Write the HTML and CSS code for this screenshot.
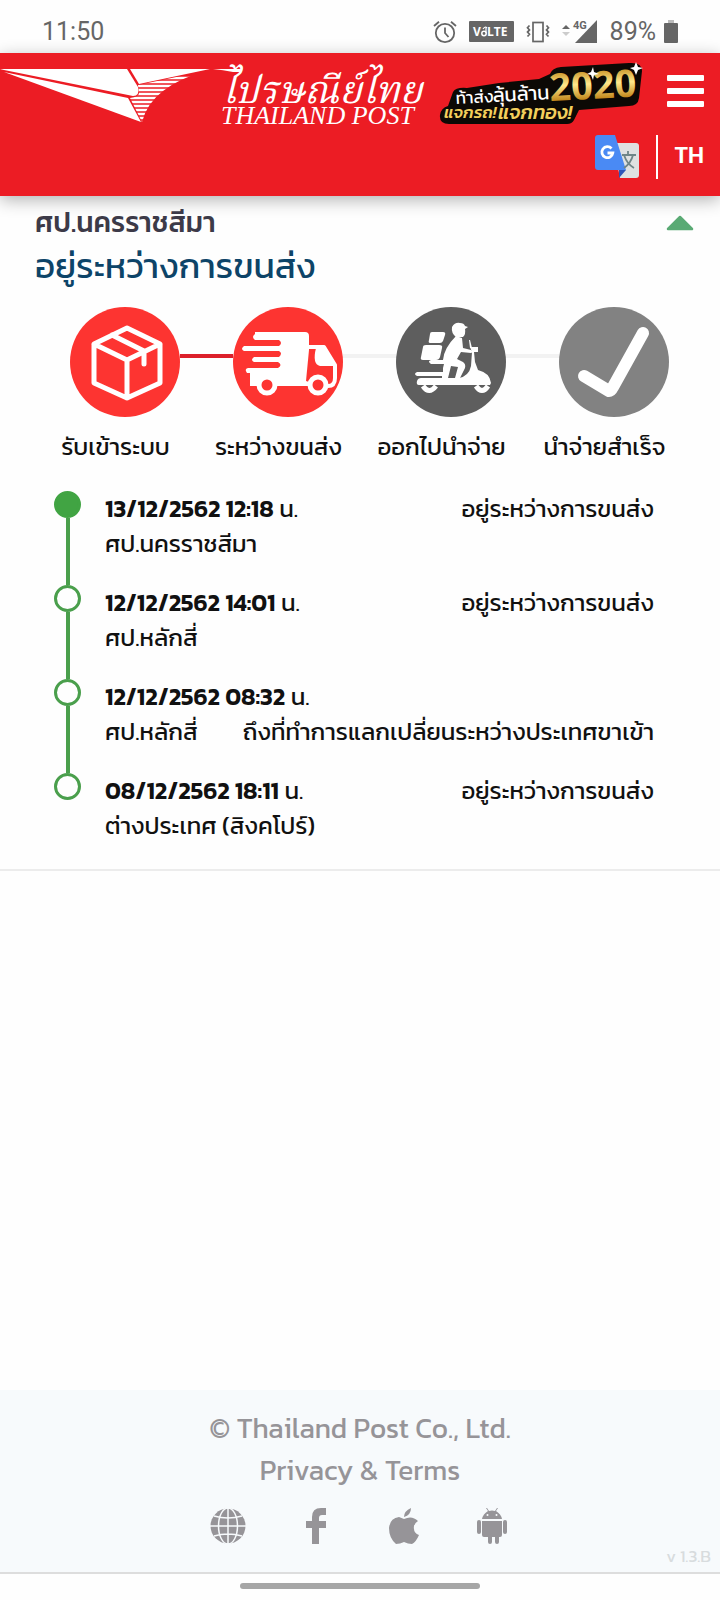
FILE: index.html
```html
<!doctype html>
<html lang="th">
<head>
    <meta charset="utf-8">
    <meta name="viewport" content="width=device-width, initial-scale=1">
    <title>Thailand Post - Track &amp; Trace</title>
    <link rel="stylesheet" href="styles.css">
</head>
<body>
<div class="statusbar">
    <span class="clock">11:50</span>
    <div class="status-icons">
        <svg width="24" height="24" viewBox="0 0 24 24" fill="none" stroke="#666" stroke-width="1.8">
            <circle cx="12" cy="13" r="9.2"/>
            <path d="M12 7.5V13l3.5 4M1 6l5-4.3M23 6l-5-4.3"/>
        </svg>
        <svg width="45" height="21" viewBox="0 0 45 21">
            <rect width="45" height="21" rx="1" fill="#666"/>
            <text x="4" y="15" class="volte">V</text>
            <circle cx="15" cy="12.5" r="2.2" fill="none" stroke="#fff" stroke-width="1.5"/>
            <path d="M14 8q2-3 4-1M17 12V7" fill="none" stroke="#fff" stroke-width="1.2"/>
            <text x="18" y="15" class="volte">LTE</text>
        </svg>
        <svg width="24" height="22" viewBox="0 0 24 22" fill="none" stroke="#666" stroke-width="1.7">
            <rect x="7" y="1.5" width="10" height="19"/>
            <path d="M3.500 4.500l-2 2.200 2 2.200-2 2.200 2 2.200-2 2.200M20.500 4.500l2 2.200-2 2.200 2 2.200-2 2.200 2 2.200"/>
        </svg>
        <svg width="36" height="24" viewBox="0 0 36 24">
            <path d="M0 9l4-4 4 4z" fill="#666"/>
            <path d="M0 12h8l-4 4z" fill="#ccc"/>
            <path d="M13 23L35 0v23z" fill="#666"/>
            <text x="11" y="9" class="net">4G</text>
        </svg>
        <div class="battery">
            <span>89%</span>
            <svg width="14" height="24" viewBox="0 0 14 24">
                <path d="M4 0h6v3h4H0h4z" fill="#bbb"/>
                <rect y="3" width="14" height="20" rx="1" fill="#666"/>
            </svg>
        </div>
    </div>
</div>

<header class="header">
    <div class="header-top">
        <a class="logo" href="#" aria-label="Thailand Post">
            <svg width="424" height="64" viewBox="0 0 424 64">
                <defs>
                    <clipPath id="tail">
                        <path d="M138 20L205 6Q178 14 163 26 147 38 142 57L130 33Q139 32 139 28z"/>
                    </clipPath>
                </defs>
                <g fill="#fff">
                    <path d="M0 4H127L138 22Q140 31 133 31L4 5z"/>
                    <path d="M130 4h80l-71 15z"/>
                    <path d="M4 7l124 26 13 24z"/>
                </g>
                <path d="M128 13h90M128 17h90M128 21h90M128 25h90M128 29h90M128 33h90M128 37h90M128 41h90M128 45h90M128 49h90M128 53h90M128 57h90" stroke="#fff" stroke-width="2.3" clip-path="url(#tail)"/>
                <path d="M213 4h29l-1 3h-8q-10-2-20-3z" fill="#fff"/>
                <text x="222" y="38" class="logo-th">ไปรษณีย์ไทย</text>
                <text x="221" y="59" class="logo-en">THAILAND POST</text>
            </svg>
        </a>
        <a class="promo" href="#" aria-label="2020">
            <svg width="206" height="64" viewBox="0 0 206 64">
                <defs>
                    <linearGradient id="gold" x1="0" y1="0" x2="0" y2="1">
                        <stop offset="0.2" stop-color="#c48a1c"/>
                        <stop offset="0.5" stop-color="#ffe98c"/>
                        <stop offset="0.8" stop-color="#c08418"/>
                    </linearGradient>
                </defs>
                <path d="M14 27Q17 22 28 23L60 18 100 14 111 9Q113 3 122 2L190-2Q203-3 203 6L200 33Q199 41 190 41L140 45 135 55Q133 59 128 59L10 59Q0 59 1 50 2 43 9 41z" fill="#0c0905"/>
                <g transform="rotate(-3 16 38)">
                    <text x="17" y="39" class="promo-white">ท้าส่ง</text>
                    <text x="54" y="39" class="promo-white promo-big">ลุ้นล้าน</text>
                    <text x="111" y="41" class="promo-year">2020</text>
                </g>
                <text x="5" y="53" class="promo-gold">แจกรถ!</text>
                <text x="59" y="54" class="promo-gold promo-big">แจกทอง!</text>
                <path d="M197-3l2 5 5 1-5 2-2 5-2-5-4-2 4-1zM154 2l1 5 5 2-5 1-1 5-2-5-4-1 4-2z" fill="#fff"/>
            </svg>
        </a>
        <button class="menu" type="button" aria-label="Menu">
            <span></span>
            <span></span>
            <span></span>
        </button>
    </div>
    <div class="header-lang">
        <button class="translate" type="button" aria-label="Translate">
            <svg width="44" height="45" viewBox="0 0 44 45">
                <path d="M18 9h23q3 0 3 3v29q0 3-3 3H25z" fill="#dfe1e2"/>
                <path d="M24 36h7l-7 8z" fill="#3055b8"/>
                <path d="M3 1h17l11 35H3q-3 0-3-3V4q0-3 3-3z" fill="#4a8af4"/>
                <path d="M16.500 14.500a5.500 5.500 0 1 0 1.300 4.500H12.500" fill="none" stroke="#fff" stroke-width="2.800"/>
                <path d="M27 21h14M33 17v4M29 21q3 9 10 13M38 21q-2 8-9 13" fill="none" stroke="#6f8588" stroke-width="1.800"/>
            </svg>
        </button>
        <span class="lang-line"></span>
        <a class="lang" href="#">TH</a>
    </div>
</header>

<main class="content">
    <section class="parcel">
        <div class="parcel-head">
            <div>
                <h2>ศป.นครราชสีมา</h2>
                <h1>อยู่ระหว่างการขนส่ง</h1>
            </div>
            <button class="collapse" type="button" aria-label="Collapse">
                <svg width="28" height="16" viewBox="0 0 28 16">
                    <path d="M14 2L26 14H2z" fill="#5aaa74" stroke="#5aaa74" stroke-width="2.500" stroke-linejoin="round"/>
                </svg>
            </button>
        </div>

        <ol class="steps">
            <li class="step">
                <div class="step-icon">
                    <svg width="110" height="110" viewBox="0 0 110 110">
                        <circle cx="55" cy="55" r="55" fill="#fd3431"/>
                        <g fill="none" stroke="#fff" stroke-width="5" stroke-linejoin="round" stroke-linecap="round">
                            <path d="M57 21L90 37V76L57 91 24 76V37zM24 37l33 16 33-16M57 53v38M42 28l32 16V57"/>
                        </g>
                    </svg>
                </div>
                <span class="step-name">รับเข้าระบบ</span>
            </li>
            <li class="step">
                <div class="step-icon">
                    <svg width="110" height="110" viewBox="0 0 110 110">
                        <circle cx="55" cy="55" r="55" fill="#fd3431"/>
                        <path d="M22 25H72q4 0 4 4V79H17V66H14q-3-4 1-5H45q5-3 0-6H21q-4-2 0-5H46q4-4 0-6H11q-4-2 0-5H46q4-3 0-6H22q-4-3 0-6z" fill="#fff"/>
                        <path d="M76 40H91L102 58V71Q102 79 95 79" fill="none" stroke="#fff" stroke-width="4" stroke-linejoin="round"/>
                        <path d="M83 41h8l12 18H87q-8-2-4-18z" fill="#fff"/>
                        <path d="M76 43l-3 31 3 1z" fill="#fd3431"/>
                        <circle cx="34" cy="78" r="8" fill="#fd3431" stroke="#fff" stroke-width="5"/>
                        <circle cx="85" cy="78" r="8" fill="#fd3431" stroke="#fff" stroke-width="5"/>
                    </svg>
                </div>
                <span class="step-name">ระหว่างขนส่ง</span>
            </li>
            <li class="step">
                <div class="step-icon">
                    <svg width="110" height="110" viewBox="0 0 110 110">
                        <circle cx="55" cy="55" r="55" fill="#5e5e5e"/>
                        <g fill="#fff">
                            <path d="M56 20q3-5 8-4 4 0 5 3l3 1-3 2q1 5-2 8h-7q-5-4-4-10z"/>
                            <path d="M36 25h11q3 0 2 3l-2 6q-1 2-3 2H34q-2 0-1-3l1-6q0-2 2-2zM30 38h13q4 0 3 3l-2 9q-1 3-4 3H27q-3 0-2-3l2-10q0-2 3-2z"/>
                            <path d="M60 29l6 2 1 10 8 2q3 2 0 3l-10-1-4 7 6 3q3 2 2 6l-5 10h-5l3-11-7-1-3 12H46V69H21q-4-2 0-4H47v-4l1-4H35q-4-3 0-4H47q1-12 13-24z"/>
                            <path d="M74 40h8v5h-4l1 10 3 8q12 3 13 13l-1 2H23q-3 0-2-4 1-3 4-3H63q10-2 12-12l1-14z"/>
                            <path d="M73 33h1l2 8h-2z"/>
                        </g>
                        <path d="M27 79Q33 88 40 79M80 79Q86 88 92 79" fill="none" stroke="#fff" stroke-width="5"/>
                    </svg>
                </div>
                <span class="step-name">ออกไปนำจ่าย</span>
            </li>
            <li class="step">
                <div class="step-icon">
                    <svg width="110" height="110" viewBox="0 0 110 110">
                        <circle cx="55" cy="55" r="55" fill="#828282"/>
                        <path d="M25 69L50 84Q52 84 54 80L84 26" fill="none" stroke="#fff" stroke-width="12" stroke-linecap="round" stroke-linejoin="round"/>
                    </svg>
                </div>
                <span class="step-name">นำจ่ายสำเร็จ</span>
            </li>
        </ol>

        <ul class="timeline">
            <li class="event current">
                <div class="rail"></div>
                <div class="event-body">
                    <div class="row"><span><b>13/12/2562 12:18</b> น.</span><span>อยู่ระหว่างการขนส่ง</span></div>
                    <div class="row"><span>ศป.นครราชสีมา</span></div>
                </div>
            </li>
            <li class="event">
                <div class="rail"></div>
                <div class="event-body">
                    <div class="row"><span><b>12/12/2562 14:01</b> น.</span><span>อยู่ระหว่างการขนส่ง</span></div>
                    <div class="row"><span>ศป.หลักสี่</span></div>
                </div>
            </li>
            <li class="event">
                <div class="rail"></div>
                <div class="event-body">
                    <div class="row"><span><b>12/12/2562 08:32</b> น.</span></div>
                    <div class="row"><span>ศป.หลักสี่</span><span>ถึงที่ทำการแลกเปลี่ยนระหว่างประเทศขาเข้า</span></div>
                </div>
            </li>
            <li class="event">
                <div class="rail"></div>
                <div class="event-body">
                    <div class="row"><span><b>08/12/2562 18:11</b> น.</span><span>อยู่ระหว่างการขนส่ง</span></div>
                    <div class="row"><span>ต่างประเทศ (สิงคโปร์)</span></div>
                </div>
            </li>
        </ul>
    </section>
</main>

<footer class="footer">
    <p>© Thailand Post Co., Ltd.</p>
    <p><a href="#">Privacy &amp; Terms</a></p>
    <div class="social">
        <a href="#" aria-label="Website">
            <svg width="36" height="36" viewBox="0 0 36 36">
                <circle cx="18" cy="18" r="17.500" fill="#969498"/>
                <g fill="none" stroke="#f7fafc" stroke-width="1.500">
                    <path d="M18 0v36M0 18h36M4 8q14 4 28 0M4 28q14-4 28 0"/>
                    <ellipse cx="18" cy="18" rx="9.500" ry="18"/>
                </g>
            </svg>
        </a>
        <a href="#" aria-label="Facebook">
            <svg width="36" height="36" viewBox="0 0 36 36">
                <path d="M14 36V20H8v-7h6V9q0-9 9-9h5v7h-4q-3 0-3 3v3h7v7h-7v16z" fill="#969498"/>
            </svg>
        </a>
        <a href="#" aria-label="App Store">
            <svg width="36" height="36" viewBox="0 0 36 36">
                <path d="M25 0q0 7-7 9 0-6 7-9zM18 11q8-4 14 2-5 3-4 8 0 4 5 6-3 7-7 9-4 0-8-2-4 2-8 2Q3 30 3 20 4 10 13 9z" fill="#969498"/>
            </svg>
        </a>
        <a href="#" aria-label="Google Play">
            <svg width="36" height="36" viewBox="0 0 36 36">
                <g fill="#969498">
                    <path d="M8 11q1-5 6-8l-2-3h1l2 3q3-1 6 0l2-3h1l-2 3q5 3 6 8zM8 13h20v14q0 2-2 2h-1v5q0 2-2 2t-2-2v-5h-3v5q0 2-2 2t-2-2v-5h-4q-2 0-2-2z"/>
                    <rect x="3" y="12" width="4" height="14" rx="2"/>
                    <rect x="29" y="12" width="4" height="14" rx="2"/>
                </g>
                <circle cx="13.500" cy="7" r="1" fill="#f7fafc"/>
                <circle cx="22.500" cy="7" r="1" fill="#f7fafc"/>
            </svg>
        </a>
    </div>
    <div class="version">v 1.3.B</div>
</footer>
<div class="navbar"><span></span></div>
</body>
</html>
```
FILE: styles.css
```css
*, *::before, *::after {
    box-sizing: border-box;
}

body {
    margin: 0;
    min-height: 100vh;
    display: flex;
    flex-direction: column;
    background-color: #fefefe;
    color: #111;
    font-family: Kanit, "Noto Sans Thai", "Noto Sans", sans-serif;
    font-size: 24px;
}

h1, h2, p, ol, ul {
    margin: 0;
    padding: 0;
    list-style: none;
}

a {
    color: inherit;
    text-decoration: none;
}

b {
    font-weight: 600;
}

button {
    padding: 0;
    border: 0;
    background: none;
}

svg {
    display: block;
    overflow: visible;
}

/* phone status bar */
.statusbar {
    display: flex;
    justify-content: space-between;
    align-items: center;
    height: 53px;
    padding: 10px 42px 0;
    color: #666;
    font-family: Roboto, sans-serif;
    font-size: 25px;
}

.status-icons {
    display: flex;
    align-items: center;
    gap: 12px;
}

.battery {
    display: flex;
    align-items: center;
    gap: 8px;
}

.volte {
    fill: #fff;
    font: bold 12px "Open Sans", sans-serif;
}

.net {
    fill: #666;
    font: bold 11px Roboto, sans-serif;
}

/* header */
.header {
    height: 143px;
    padding-top: 12px;
    background-color: #ec1c24;
    box-shadow: 0 4px 16px rgba(0, 0, 0, 0.3);
}

.header-top {
    display: flex;
    align-items: flex-start;
    justify-content: space-between;
    padding-right: 16px;
}

.promo {
    margin-left: auto;
    margin-right: 22px;
}

.logo-th {
    fill: #fff;
    font: italic 38px "Noto Serif Thai", "Liberation Serif", serif;
}

.logo-en {
    fill: #fff;
    font: italic 26px "Liberation Serif", serif;
}

.promo-white {
    fill: #fff;
    font: 17px Kanit, "Noto Sans Thai", sans-serif;
}

.promo-year {
    fill: url(#gold);
    font: bold 38px "Noto Sans", sans-serif;
}

.promo-gold {
    fill: #f3cf5c;
    font: italic 500 17px Kanit, "Noto Sans Thai", sans-serif;
}

.promo-big {
    font-size: 20px;
}

.menu {
    display: flex;
    flex-direction: column;
    gap: 7px;
    width: 37px;
    padding-top: 10px;
}

.menu span {
    height: 6px;
    border-radius: 1px;
    background-color: #fff;
}

.header-lang {
    display: flex;
    justify-content: flex-end;
    align-items: center;
    gap: 17px;
    padding: 5px 16px 0;
}

.lang-line {
    width: 2px;
    height: 44px;
    background-color: #fff;
}

.lang {
    padding-bottom: 4px;
    color: #fff;
    font-weight: 500;
    line-height: 36px;
}

/* parcel */
.content {
    flex: 1;
}

.parcel {
    border-bottom: 2px solid #ececec;
    padding-bottom: 26px;
}

.parcel-head {
    display: flex;
    justify-content: space-between;
    align-items: flex-start;
    padding: 4px 26px 0 35px;
}

.parcel-head h2 {
    color: #3c3a48;
    font-size: 28px;
    font-weight: 500;
    line-height: 44px;
}

.parcel-head h1 {
    color: #0d4468;
    font-size: 35px;
    font-weight: normal;
    line-height: 44px;
}

.collapse {
    padding-top: 15px;
}

.steps {
    display: grid;
    grid-template-columns: repeat(4, 1fr);
    padding: 19px 25px 0 43px;
}

.step {
    text-align: center;
    line-height: 40px;
    white-space: nowrap;
}

.step-icon {
    display: flex;
    align-items: center;
    margin-bottom: 10px;
}

.step-icon::before,
.step-icon::after {
    content: "";
    flex: 1;
    height: 4px;
    margin-bottom: 12px;
    background-color: #f2f2f2;
}

.step:first-child .step-icon::before,
.step:last-child .step-icon::after {
    background-color: transparent;
}

.step:first-child .step-icon::after,
.step:nth-child(2) .step-icon::before {
    background-color: #dc202a;
}

.step-name {
    display: block;
    padding-right: 18px;
}

/* timeline */
.timeline {
    padding: 24px 66px 0 54px;
}

.event {
    display: flex;
    gap: 24px;
}

.event-body {
    flex: 1;
    padding-bottom: 24px;
    line-height: 35px;
}

.event:last-child .event-body {
    padding-bottom: 0;
}

.row {
    display: flex;
    justify-content: space-between;
    white-space: nowrap;
}

.rail {
    display: flex;
    flex-direction: column;
    align-items: center;
    width: 27px;
}

.rail::before {
    content: "";
    width: 27px;
    height: 27px;
    border: 3px solid #4a9f4c;
    border-radius: 50%;
}

.rail::after {
    content: "";
    flex: 1;
    width: 4px;
    background-color: #4a9f4c;
}

.current .rail::before {
    border-color: #41a443;
    background-color: #41a443;
}

.event:last-child .rail::after {
    display: none;
}

/* footer */
.footer {
    padding: 17px 9px 4px;
    border-bottom: 2px solid #ddd;
    background-color: #f7fafc;
    color: #969498;
    font-size: 28px;
    line-height: 42px;
    text-align: center;
}

.social {
    display: flex;
    justify-content: center;
    gap: 52px;
    padding-top: 17px;
}

.version {
    color: #d8dcde;
    font-size: 17px;
    line-height: 24px;
    text-align: right;
}

.navbar {
    display: flex;
    justify-content: center;
    padding: 9px 0 11px;
}

.navbar span {
    width: 240px;
    height: 6px;
    border-radius: 3px;
    background-color: #a6a6a6;
}
```
